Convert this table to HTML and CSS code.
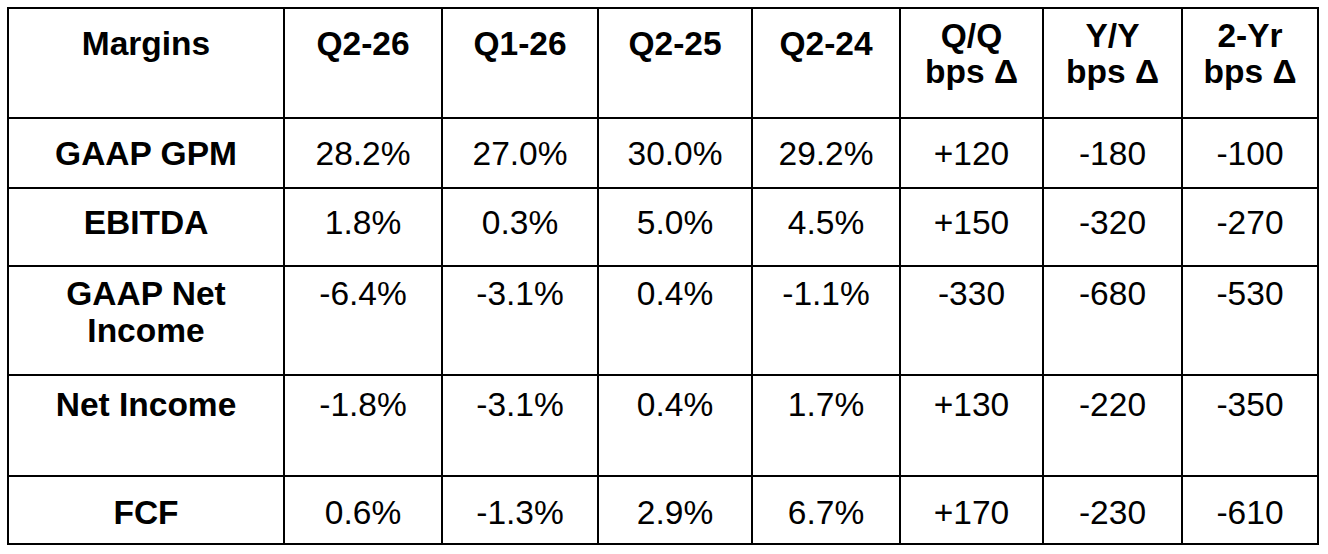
FILE: index.html
```html
<!DOCTYPE html>
<html lang="en">
<head>
<meta charset="utf-8">
<title>Margins</title>
<link rel="stylesheet" href="styles.css">
</head>
<body>
<table class="margins">
  <colgroup>
    <col class="c-label">
    <col class="c-q226">
    <col class="c-q126">
    <col class="c-q225">
    <col class="c-q224">
    <col class="c-qq">
    <col class="c-yy">
    <col class="c-2y">
  </colgroup>
  <thead>
    <tr class="r-head">
      <th class="one">Margins</th>
      <th class="one">Q2-26</th>
      <th class="one">Q1-26</th>
      <th class="one">Q2-25</th>
      <th class="one">Q2-24</th>
      <th>Q/Q<br>bps Δ</th>
      <th>Y/Y<br>bps Δ</th>
      <th>2-Yr<br>bps Δ</th>
    </tr>
  </thead>
  <tbody>
    <tr class="r-gpm">
      <th>GAAP GPM</th>
      <td>28.2%</td><td>27.0%</td><td>30.0%</td><td>29.2%</td>
      <td>+120</td><td>-180</td><td>-100</td>
    </tr>
    <tr class="r-ebitda">
      <th>EBITDA</th>
      <td>1.8%</td><td>0.3%</td><td>5.0%</td><td>4.5%</td>
      <td>+150</td><td>-320</td><td>-270</td>
    </tr>
    <tr class="r-gni">
      <th>GAAP Net<br>Income</th>
      <td>-6.4%</td><td>-3.1%</td><td>0.4%</td><td>-1.1%</td>
      <td>-330</td><td>-680</td><td>-530</td>
    </tr>
    <tr class="r-ni">
      <th>Net Income</th>
      <td>-1.8%</td><td>-3.1%</td><td>0.4%</td><td>1.7%</td>
      <td>+130</td><td>-220</td><td>-350</td>
    </tr>
    <tr class="r-fcf">
      <th>FCF</th>
      <td>0.6%</td><td>-1.3%</td><td>2.9%</td><td>6.7%</td>
      <td>+170</td><td>-230</td><td>-610</td>
    </tr>
  </tbody>
</table>
</body>
</html>
```

FILE: styles.css
```css
html, body {
  margin: 0;
  background: #ffffff;
}

body {
  padding: 7px 0 0 7px;
  font-family: "Liberation Sans", Arial, sans-serif;
  color: #000000;
}

.margins {
  table-layout: fixed;
  width: 1312px;
  border-collapse: separate;
  border-spacing: 0;
  border-left: 2px solid #000;
  border-top: 2px solid #000;
  font-size: 33.5px;
  line-height: 36px;
}

.margins th,
.margins td {
  box-sizing: border-box;
  border-right: 2px solid #000;
  border-bottom: 2px solid #000;
  padding: 0;
  text-align: center;
  vertical-align: top;
  white-space: nowrap;
}

.margins th { font-weight: 700; }
.margins td { font-weight: 400; }

.c-label { width: 276px; }
.c-q226  { width: 158px; }
.c-q126  { width: 156px; }
.c-q225  { width: 154px; }
.c-q224  { width: 148px; }
.c-qq    { width: 143px; }
.c-yy    { width: 139px; }
.c-2y    { width: 136px; }

.r-head   { height: 110px; }
.r-gpm    { height: 70px; }
.r-ebitda { height: 78px; }
.r-gni    { height: 109px; }
.r-ni     { height: 101px; }
.r-fcf    { height: 68px; }

.r-head th      { padding-top: 9px; }
.r-head th.one  { padding-top: 17px; }
.r-gpm th, .r-gpm td       { padding-top: 17px; }
.r-ebitda th, .r-ebitda td { padding-top: 16px; }
.r-gni th, .r-gni td       { padding-top: 8px; line-height: 37px; }
.r-ni th, .r-ni td         { padding-top: 11px; }
.r-fcf th, .r-fcf td       { padding-top: 18px; }
```
